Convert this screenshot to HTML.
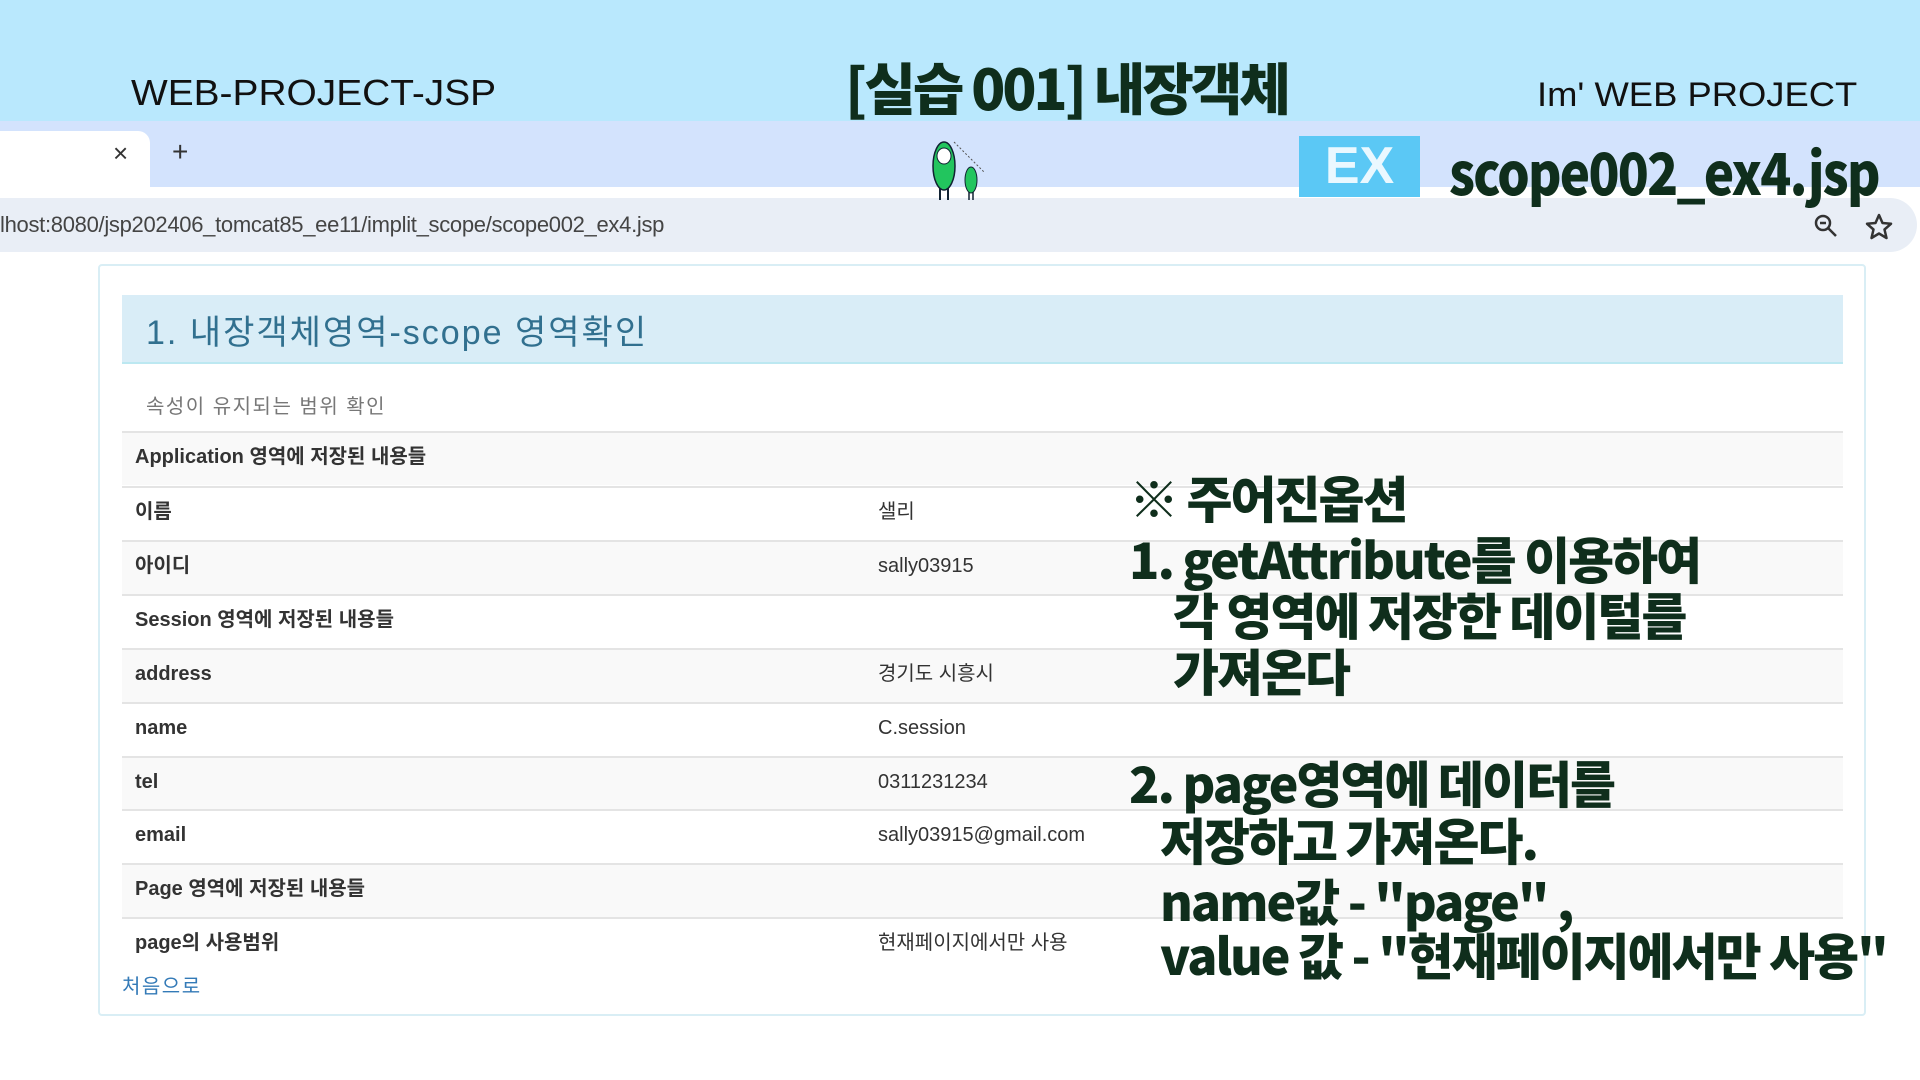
<!DOCTYPE html>
<html><head><meta charset="utf-8"><style>
*{margin:0;padding:0;box-sizing:border-box}
body{width:1920px;height:1080px;position:relative;overflow:hidden;background:#fff;font-family:"Liberation Sans","Noto Sans CJK KR",sans-serif}
.a{position:absolute;white-space:nowrap}
.top{position:absolute;left:0;top:0;width:1920px;height:121px;background:#b9e8fd}
.tabbar{position:absolute;left:0;top:121px;width:1920px;height:66px;background:#d3e3fd}
.tab{position:absolute;left:0;top:131px;width:150px;height:56px;background:#fff;border-top-right-radius:12px}
.addr{position:absolute;left:0;top:198px;width:1917px;height:54px;background:#e9eef6;border-radius:0 27px 27px 0}
.dg{color:#0f2e1c;font-family:"Noto Sans CJK KR",sans-serif;font-weight:900;letter-spacing:-2px}
.box{position:absolute;left:98px;top:264px;width:1768px;height:752px;border:2px solid #d9eef5;border-radius:4px}
.hd{position:absolute;left:122px;top:295px;width:1721px;height:69px;background:#d9edf7;border-bottom:2px solid #bce8f1;color:#31708f;font-size:34px;padding:10px 24px;letter-spacing:2px;font-family:"Liberation Sans","Noto Sans CJK KR",sans-serif}
.row{position:absolute;left:122px;width:1721px;height:54px;border-top:2px solid #e4e4e4;font-size:20px;color:#333}
.row.g{background:#f9f9f9}
.row span{position:absolute;top:12px;line-height:24px;height:24px}
.row .k{left:13px;font-weight:bold}
.row .v{left:756px}
.ann{font-size:50px;line-height:1}
</style></head><body>
<div class="top"></div>
<div class="tabbar"></div>
<div class="tab"></div>
<div class="a" style="left:113px;top:138px;font-size:26px;color:#333">×</div>
<div class="a" style="left:172px;top:136px;font-size:28px;color:#333">+</div>
<div class="addr"></div>
<div class="a" style="left:0;top:212px;font-size:22px;color:#444;letter-spacing:-0.3px">lhost:8080/jsp202406_tomcat85_ee11/implit_scope/scope002_ex4.jsp</div>
<svg class="a" style="left:1812px;top:212px" width="28" height="28" viewBox="0 0 28 28"><circle cx="11" cy="11" r="7" fill="none" stroke="#333" stroke-width="2.5"/><path d="M16 16l8 8M8 11h6" stroke="#333" stroke-width="2.5"/></svg>
<svg class="a" style="left:1864px;top:212px" width="30" height="30" viewBox="0 0 30 30"><path d="M15 3l3.5 8 8.5.8-6.5 5.7 2 8.5L15 21.5 7.5 26l2-8.5L3 11.8l8.5-.8z" fill="none" stroke="#333" stroke-width="2.5" stroke-linejoin="round"/></svg>

<div class="a" style="left:131px;top:72px;font-size:36px;color:#111;transform:scaleX(1.08);transform-origin:left">WEB-PROJECT-JSP</div>
<div class="a dg" style="left:845px;top:46px;font-size:56px;letter-spacing:-3px">[실습 001] 내장객체</div>
<div class="a" style="left:1537px;top:76px;font-size:34px;color:#111;transform:scaleX(1.07);transform-origin:left">Im' WEB PROJECT</div>
<div class="a" style="left:1299px;top:136px;width:121px;height:61px;background:#5bc8f5;color:#eaf8ff;font-size:52px;font-weight:bold;text-align:center;line-height:61px">EX</div>
<div class="a dg" style="left:1449px;top:128px;font-size:58px;letter-spacing:-2px;transform:scaleX(0.88);transform-origin:left">scope002_ex4.jsp</div>

<svg class="a" style="left:914px;top:132px" width="84" height="70" viewBox="0 0 84 70">
<ellipse cx="30" cy="34" rx="11" ry="24" fill="#22c55e" stroke="#123" stroke-width="1.5"/>
<ellipse cx="30" cy="24" rx="7" ry="8" fill="#fff" stroke="#123"/>
<path d="M26 56v12M34 56v12" stroke="#123" stroke-width="2"/>
<ellipse cx="57" cy="48" rx="6" ry="13" fill="#22c55e" stroke="#123"/>
<path d="M55 60v8M59 60v8" stroke="#123" stroke-width="1.5"/>
<path d="M40 10l30 30" stroke="#555" stroke-dasharray="2 2"/>
</svg>

<div class="box"></div>
<div class="hd">1. 내장객체영역-scope 영역확인</div>
<div class="a" style="left:146px;top:390px;font-size:20px;color:#777;letter-spacing:1.5px">속성이 유지되는 범위 확인</div>

<div class="row g" style="top:431px"><span class="k">Application 영역에 저장된 내용들</span></div>
<div class="row" style="top:486px"><span class="k">이름</span><span class="v">샐리</span></div>
<div class="row g" style="top:540px"><span class="k">아이디</span><span class="v">sally03915</span></div>
<div class="row" style="top:594px"><span class="k">Session 영역에 저장된 내용들</span></div>
<div class="row g" style="top:648px"><span class="k">address</span><span class="v">경기도 시흥시</span></div>
<div class="row" style="top:702px"><span class="k">name</span><span class="v">C.session</span></div>
<div class="row g" style="top:756px"><span class="k">tel</span><span class="v">0311231234</span></div>
<div class="row" style="top:809px"><span class="k">email</span><span class="v">sally03915@gmail.com</span></div>
<div class="row g" style="top:863px"><span class="k">Page 영역에 저장된 내용들</span></div>
<div class="row" style="top:917px;height:50px"><span class="k">page의 사용범위</span><span class="v">현재페이지에서만 사용</span></div>
<div class="a" style="left:122px;top:970px;font-size:20px;color:#337ab7;letter-spacing:1.5px">처음으로</div>

<div class="a dg ann" style="left:1129px;top:472px">※ 주어진옵션</div>
<div class="a dg ann" style="left:1129px;top:533px">1. getAttribute를 이용하여</div>
<div class="a dg ann" style="left:1173px;top:589px">각 영역에 저장한 데이털를</div>
<div class="a dg ann" style="left:1173px;top:645px">가져온다</div>
<div class="a dg ann" style="left:1129px;top:757px">2. page영역에 데이터를</div>
<div class="a dg ann" style="left:1160px;top:814px">저장하고 가져온다.</div>
<div class="a dg ann" style="left:1160px;top:875px">name값 - "page" ,</div>
<div class="a dg ann" style="left:1160px;top:929px">value 값 - "현재페이지에서만 사용"</div>
</body></html>
